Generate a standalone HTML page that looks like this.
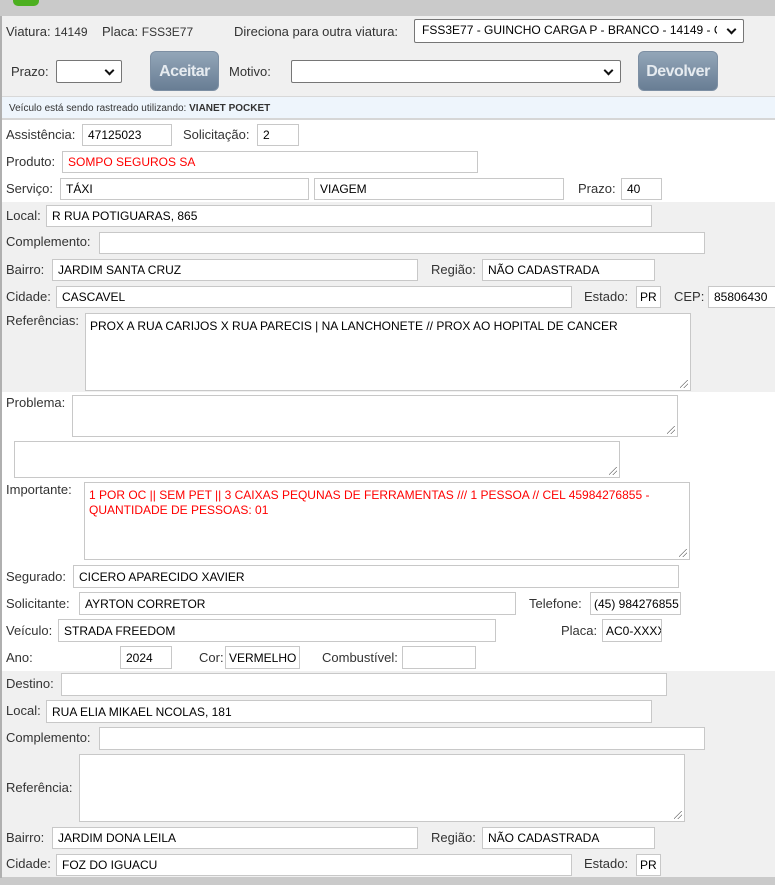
<!DOCTYPE html>
<html><head><meta charset="utf-8">
<style>
*{margin:0;padding:0;box-sizing:border-box}
body{width:775px;height:885px;overflow:hidden;position:relative;background:#fff;font-family:"Liberation Sans",Arial,sans-serif;font-size:13px;color:#333}
.a{position:absolute}
.l{position:absolute;white-space:nowrap;line-height:14px;color:#333}
.i{position:absolute;background:#fff;border:1px solid #c8c8c8;font-size:12px;color:#000;padding-left:5px;display:flex;align-items:center;white-space:nowrap;overflow:hidden}
.t{position:absolute;background:#fff;border:1px solid #c8c8c8;font-size:12px;color:#000;padding:5px 4px;line-height:15px}
.t:after{content:"";position:absolute;right:2px;bottom:2px;width:8px;height:8px;background:linear-gradient(135deg,transparent 45%,#777 45%,#777 52%,transparent 52%,transparent 70%,#777 70%,#777 77%,transparent 77%)}
.s{position:absolute;background:#fff;border:1px solid #767676;border-radius:2px;font-size:12px;color:#000;padding-left:7px;line-height:21px;white-space:nowrap}
.s span{display:block;overflow:hidden}
.s:after{content:"";position:absolute;right:8px;top:6px;width:5px;height:5px;border-right:2px solid #111;border-bottom:2px solid #111;transform:rotate(45deg)}
.b{position:absolute;border-radius:6px;background:linear-gradient(#93a6b8,#687d94);color:#e6ebf0;font-weight:bold;font-size:16px;text-align:center;line-height:39px;border:1px solid #7d8fa3;letter-spacing:-0.5px}
.red{color:#f00}
</style></head><body>
<div class="a" style="left:0;top:0;width:775px;height:16px;background:#cacaca"></div>
<div class="a" style="left:13px;top:0;width:26px;height:6px;background:#4caf1f;border-radius:0 0 5px 5px"></div>
<div class="a" style="left:0;top:16px;width:775px;height:80px;background:#f0f0f0"></div>
<div class="a" style="left:0;top:96px;width:775px;height:24px;background:#eef5fc;border-top:1px solid #d8d8d8;border-bottom:2px solid #d6d6d6"></div>
<div class="a" style="left:0;top:202px;width:775px;height:190px;background:#f0f0f0"></div>
<div class="a" style="left:0;top:671px;width:775px;height:206px;background:#f0f0f0"></div>
<div class="a" style="left:0;top:877px;width:775px;height:8px;background:#cacaca"></div>
<div class="a" style="left:0;top:16px;width:2px;height:862px;background:#b0b0b0"></div>

<div class="l" style="left:6px;top:25px">Viatura: <span style="font-size:12px">14149</span>&nbsp;&nbsp;&nbsp; Placa: <span style="font-size:12px">FSS3E77</span></div>
<div class="l" style="left:234px;top:25px">Direciona para outra viatura:</div>
<div class="s" style="left:414px;top:19px;width:330px;height:24px;padding-right:26px"><span>FSS3E77 - GUINCHO CARGA P - BRANCO - 14149 - CAMINHAO</span></div>
<div class="l" style="left:11px;top:65px">Prazo:</div>
<div class="s" style="left:56px;top:60px;width:66px;height:23px"></div>
<div class="b" style="left:150px;top:51px;width:69px;height:40px">Aceitar</div>
<div class="l" style="left:229px;top:65px">Motivo:</div>
<div class="s" style="left:291px;top:60px;width:330px;height:23px"></div>
<div class="b" style="left:638px;top:51px;width:80px;height:40px">Devolver</div>
<div class="l" style="left:9px;top:102px;font-size:10px">Veículo está sendo rastreado utilizando: <b>VIANET POCKET</b></div>

<div class="l" style="left:6px;top:128px">Assistência:</div>
<div class="i" style="left:82px;top:124px;width:90px;height:22px">47125023</div>
<div class="l" style="left:183px;top:128px">Solicitação:</div>
<div class="i" style="left:257px;top:124px;width:42px;height:22px">2</div>
<div class="l" style="left:6px;top:155px">Produto:</div>
<div class="i red" style="left:62px;top:151px;width:416px;height:22px">SOMPO SEGUROS SA</div>
<div class="l" style="left:6px;top:182px">Serviço:</div>
<div class="i" style="left:60px;top:178px;width:249px;height:22px">TÁXI</div>
<div class="i" style="left:314px;top:178px;width:250px;height:22px">VIAGEM</div>
<div class="l" style="left:578px;top:182px">Prazo:</div>
<div class="i" style="left:621px;top:178px;width:41px;height:22px">40</div>

<div class="l" style="left:6px;top:209px">Local:</div>
<div class="i" style="left:46px;top:205px;width:606px;height:22px">R RUA POTIGUARAS, 865</div>
<div class="l" style="left:6px;top:235px">Complemento:</div>
<div class="i" style="left:99px;top:232px;width:606px;height:22px"></div>
<div class="l" style="left:6px;top:263px">Bairro:</div>
<div class="i" style="left:52px;top:259px;width:366px;height:22px">JARDIM SANTA CRUZ</div>
<div class="l" style="left:431px;top:263px">Região:</div>
<div class="i" style="left:482px;top:259px;width:173px;height:22px">NÃO CADASTRADA</div>
<div class="l" style="left:6px;top:290px">Cidade:</div>
<div class="i" style="left:56px;top:286px;width:516px;height:22px">CASCAVEL</div>
<div class="l" style="left:584px;top:290px">Estado:</div>
<div class="i" style="left:636px;top:286px;width:25px;height:22px;padding-left:3px">PR</div>
<div class="l" style="left:674px;top:290px">CEP:</div>
<div class="i" style="left:708px;top:286px;width:70px;height:22px">85806430</div>
<div class="l" style="left:6px;top:314px">Referências:</div>
<div class="t" style="left:85px;top:313px;width:606px;height:78px">PROX A RUA CARIJOS X RUA PARECIS | NA LANCHONETE // PROX AO HOPITAL DE CANCER</div>

<div class="l" style="left:6px;top:396px">Problema:</div>
<div class="t" style="left:72px;top:395px;width:606px;height:42px"></div>
<div class="t" style="left:14px;top:441px;width:606px;height:37px"></div>
<div class="l" style="left:6px;top:483px">Importante:</div>
<div class="t red" style="left:84px;top:482px;width:606px;height:78px">1 POR OC || SEM PET || 3 CAIXAS PEQUNAS DE FERRAMENTAS /// 1 PESSOA // CEL 45984276855 - QUANTIDADE DE PESSOAS: 01</div>

<div class="l" style="left:6px;top:570px">Segurado:</div>
<div class="i" style="left:73px;top:565px;width:606px;height:23px">CICERO APARECIDO XAVIER</div>
<div class="l" style="left:6px;top:597px">Solicitante:</div>
<div class="i" style="left:79px;top:592px;width:437px;height:23px">AYRTON CORRETOR</div>
<div class="l" style="left:529px;top:597px">Telefone:</div>
<div class="i" style="left:590px;top:592px;width:91px;height:23px;padding-left:3px">(45) 984276855</div>
<div class="l" style="left:6px;top:624px">Veículo:</div>
<div class="i" style="left:58px;top:619px;width:438px;height:23px">STRADA FREEDOM</div>
<div class="l" style="left:561px;top:624px">Placa:</div>
<div class="i" style="left:602px;top:619px;width:60px;height:23px;padding-left:3px">AC0-XXXX</div>
<div class="l" style="left:6px;top:651px">Ano:</div>
<div class="i" style="left:120px;top:646px;width:52px;height:23px">2024</div>
<div class="l" style="left:199px;top:651px">Cor:</div>
<div class="i" style="left:225px;top:646px;width:75px;height:23px;padding-left:3px">VERMELHO</div>
<div class="l" style="left:322px;top:651px">Combustível:</div>
<div class="i" style="left:402px;top:646px;width:74px;height:23px"></div>

<div class="l" style="left:6px;top:677px">Destino:</div>
<div class="i" style="left:61px;top:673px;width:606px;height:23px"></div>
<div class="l" style="left:6px;top:704px">Local:</div>
<div class="i" style="left:46px;top:700px;width:606px;height:23px">RUA ELIA MIKAEL NCOLAS, 181</div>
<div class="l" style="left:6px;top:731px">Complemento:</div>
<div class="i" style="left:99px;top:727px;width:606px;height:23px"></div>
<div class="l" style="left:6px;top:781px">Referência:</div>
<div class="t" style="left:79px;top:754px;width:606px;height:68px"></div>
<div class="l" style="left:6px;top:831px">Bairro:</div>
<div class="i" style="left:52px;top:827px;width:366px;height:22px">JARDIM DONA LEILA</div>
<div class="l" style="left:431px;top:831px">Região:</div>
<div class="i" style="left:482px;top:827px;width:173px;height:22px">NÃO CADASTRADA</div>
<div class="l" style="left:6px;top:857px">Cidade:</div>
<div class="i" style="left:56px;top:854px;width:516px;height:22px">FOZ DO IGUACU</div>
<div class="l" style="left:584px;top:857px">Estado:</div>
<div class="i" style="left:636px;top:854px;width:25px;height:22px;padding-left:3px">PR</div>
</body></html>
